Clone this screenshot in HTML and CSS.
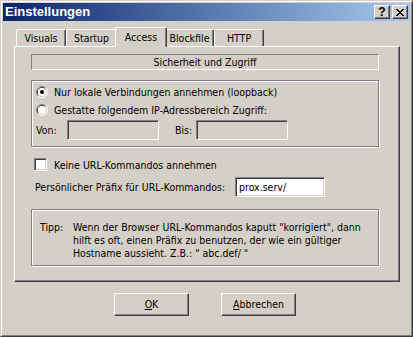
FILE: index.html
```html
<!DOCTYPE html>
<html lang="de">
<head>
<meta charset="utf-8">
<title>Einstellungen</title>
<link rel="stylesheet" href="styles.css">
</head>
<body>
<div class="window">
  <div class="titlebar">
    <span class="title">Einstellungen</span>
    <div class="caption-buttons">
      <div class="cap-btn help">?</div>
      <div class="cap-btn close">
        <svg width="8" height="7" viewBox="0 0 8 7" shape-rendering="crispEdges"><path d="M0 0h2v1H0zM6 0h2v1H6zM1 1h2v1H1zM5 1h2v1H5zM2 2h4v1H2zM3 3h2v1H3zM2 4h4v1H2zM1 5h2v1H1zM5 5h2v1H5zM0 6h2v1H0zM6 6h2v1H6z" fill="#000"/></svg>
      </div>
    </div>
  </div>
  <div class="body">
    <div class="tabs">
      <div class="tab tab-visuals">Visuals</div>
      <div class="tab tab-startup">Startup</div>
      <div class="tab tab-access active">Access</div>
      <div class="tab tab-blockfile">Blockfile</div>
      <div class="tab tab-http">HTTP</div>
    </div>
    <div class="panel">
      <div class="section-head">Sicherheit und Zugriff</div>
      <div class="group radio-group">
        <div class="radio-row">
          <svg class="radio" width="12" height="12" viewBox="0 0 12 12">
            <path d="M2.11 9.89A5.5 5.5 0 0 1 9.89 2.11" fill="none" stroke="#808080"/>
            <path d="M9.89 2.11A5.5 5.5 0 0 1 2.11 9.89" fill="none" stroke="#ffffff"/>
            <path d="M2.82 9.18A4.5 4.5 0 0 1 9.18 2.82" fill="none" stroke="#404040"/>
            <path d="M9.18 2.82A4.5 4.5 0 0 1 2.82 9.18" fill="none" stroke="#d4d0c8"/>
            <circle cx="6" cy="6" r="4" fill="#fff"/>
            <circle cx="6" cy="6" r="2" fill="#000"/>
          </svg>
          <span>Nur lokale Verbindungen annehmen (loopback)</span>
        </div>
        <div class="radio-row">
          <svg class="radio" width="12" height="12" viewBox="0 0 12 12">
            <path d="M2.11 9.89A5.5 5.5 0 0 1 9.89 2.11" fill="none" stroke="#808080"/>
            <path d="M9.89 2.11A5.5 5.5 0 0 1 2.11 9.89" fill="none" stroke="#ffffff"/>
            <path d="M2.82 9.18A4.5 4.5 0 0 1 9.18 2.82" fill="none" stroke="#404040"/>
            <path d="M9.18 2.82A4.5 4.5 0 0 1 2.82 9.18" fill="none" stroke="#d4d0c8"/>
            <circle cx="6" cy="6" r="4" fill="#fff"/>
          </svg>
          <span>Gestatte folgendem IP-Adressbereich Zugriff:</span>
        </div>
        <div class="range-row">
          <span class="lbl-von">Von:</span>
          <div class="field disabled range-field"></div>
          <span class="lbl-bis">Bis:</span>
          <div class="field disabled range-field"></div>
        </div>
      </div>
      <div class="check-row">
        <span class="checkbox"></span>
        <span>Keine URL-Kommandos annehmen</span>
      </div>
      <div class="prefix-row">
        <span class="prefix-label">Persönlicher Präfix für URL-Kommandos:</span>
        <div class="field prefix-field">prox.serv/</div>
      </div>
      <div class="group tip">
        <span class="tip-label">Tipp:</span>
        <p class="tip-text">Wenn der Browser URL-Kommandos kaputt "korrigiert", dann<br>hilft es oft, einen Präfix zu benutzen, der wie ein gültiger<br>Hostname aussieht. Z.B.: " abc.def/ "</p>
      </div>
    </div>
    <div class="buttons">
      <div class="btn"><u>O</u>K</div>
      <div class="btn"><u>A</u>bbrechen</div>
    </div>
  </div>
</div>
</body>
</html>
```

FILE: styles.css
```css
* { box-sizing: border-box; }
html, body { margin: 0; padding: 0; background: #d4d0c8; }
body {
  font-family: "DejaVu Sans Condensed", "Liberation Sans", Arial, sans-serif;
  font-size: 10.5px;
  color: #000;
  width: 413px;
  height: 337px;
  overflow: hidden;
  white-space: nowrap;
}
.window {
  width: 413px;
  height: 337px;
  background: #d4d0c8;
  border: 1px solid;
  border-color: #d4d0c8 #404040 #404040 #d4d0c8;
  box-shadow: inset 1px 1px #fff, inset -1px -1px #808080;
  padding: 2px;
  display: flex;
  flex-direction: column;
}
.titlebar {
  height: 18px;
  background: linear-gradient(to right, #0a246a, #a6caf0);
  display: flex;
  align-items: center;
  justify-content: space-between;
  padding: 0 2px 0 2px;
}
.title {
  color: #fff;
  font-family: "Liberation Sans", Arial, sans-serif;
  font-weight: bold;
  font-size: 13px;
  line-height: 18px;
}
.caption-buttons { display: flex; gap: 2px; }
.cap-btn {
  width: 16px;
  height: 14px;
  background: #d4d0c8;
  border: 1px solid;
  border-color: #fff #404040 #404040 #fff;
  box-shadow: inset -1px -1px #808080;
  display: flex;
  align-items: center;
  justify-content: center;
  font-family: "Liberation Sans", Arial, sans-serif;
  font-weight: bold;
  font-size: 12px;
  line-height: 12px;
}
.body {
  flex: 1;
  display: flex;
  flex-direction: column;
  padding: 6px 0 0 11px;
}
.tabs {
  display: flex;
  align-items: flex-end;
  height: 19px;
  padding-left: 2px;
}
.tab {
  height: 17px;
  padding-top: 2px;
  line-height: 13px;
  text-align: center;
  border-left: 1px solid #fff;
  border-top: 1px solid #fff;
  border-right: 1px solid #404040;
  box-shadow: inset -1px 0 #808080;
  border-radius: 2px 2px 0 0;
  background: #d4d0c8;
}
.tab-visuals { width: 50px; }
.tab-startup { width: 51px; }
.tab-access { width: 52px; }
.tab-blockfile { width: 49px; }
.tab-http { width: 50px; }
.tab.active {
  height: 20px;
  padding-top: 3px;
  margin: 0 -2px -1px;
  position: relative;
  z-index: 1;
}
.panel {
  width: 386px;
  height: 236px;
  border: 1px solid;
  border-color: #fff #404040 #404040 #fff;
  box-shadow: inset -1px -1px #808080;
  padding: 7px 20px 0 16px;
}
.section-head {
  height: 16px;
  border: 1px solid;
  border-color: #808080 #fff #fff #808080;
  text-align: center;
  line-height: 14px;
}
.group {
  border: 1px solid #808080;
  box-shadow: 1px 1px #fff, inset 1px 1px #fff;
}
.radio-group {
  margin-top: 10px;
  height: 67px;
  padding: 2px 0 0 4px;
}
.radio-row {
  height: 18px;
  display: flex;
  align-items: center;
  gap: 6px;
}
.radio { display: block; flex: none; }
.range-row {
  margin-top: 1px;
  height: 20px;
  display: flex;
  align-items: center;
}
.lbl-von { width: 31px; }
.lbl-bis { width: 21px; margin-left: 16px; }
.field {
  height: 20px;
  border: 1px solid;
  border-color: #808080 #fff #fff #808080;
  box-shadow: inset 1px 1px #404040, inset -1px -1px #d4d0c8;
  background: #fff;
}
.field.disabled { background: #d4d0c8; }
.range-field { width: 92px; }
.check-row {
  margin-top: 11px;
  height: 13px;
  display: flex;
  align-items: center;
  gap: 7px;
  padding-left: 3px;
}
.checkbox {
  width: 13px;
  height: 13px;
  flex: none;
  background: #fff;
  border: 1px solid;
  border-color: #808080 #fff #fff #808080;
  box-shadow: inset 1px 1px #404040, inset -1px -1px #d4d0c8;
}
.prefix-row {
  margin-top: 6px;
  height: 20px;
  display: flex;
  align-items: center;
  padding-left: 4px;
}
.prefix-label { width: 200px; }
.prefix-field {
  width: 90px;
  padding: 0 3px;
  line-height: 18px;
}
.tip {
  margin-top: 12px;
  height: 57px;
  padding: 11px 0 0 8px;
  display: flex;
}
.tip-label { width: 33px; line-height: 13px; flex: none; }
.tip-text { margin: 0; line-height: 13px; }
.buttons {
  margin-top: 11px;
  display: flex;
  gap: 32px;
  padding-left: 100px;
}
.btn {
  width: 75px;
  height: 23px;
  border: 1px solid;
  border-color: #fff #404040 #404040 #fff;
  box-shadow: inset -1px -1px #808080;
  text-align: center;
  line-height: 21px;
}
```
